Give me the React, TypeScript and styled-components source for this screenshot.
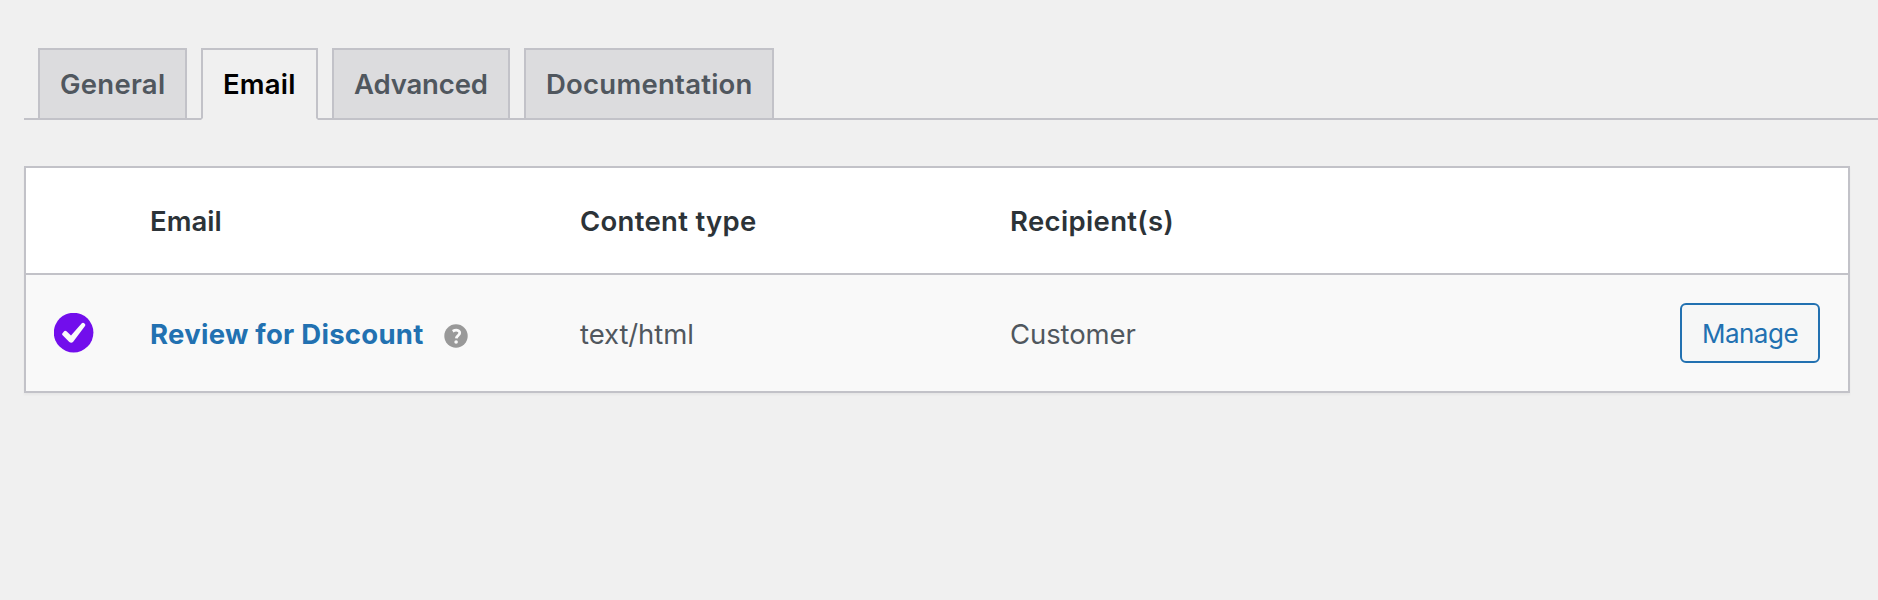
import React from "react";
import styled, { createGlobalStyle } from "styled-components";

const GlobalStyle = createGlobalStyle`
  *, *::before, *::after { box-sizing: border-box; }
  body {
    margin: 0;
    min-height: 600px;
    background: #f0f0f0;
    font-family: Inter, "Liberation Sans", sans-serif;
    font-size: 27.5px;
    line-height: 36px;
    color: #50575e;
    overflow: hidden;
  }
`;

const Page = styled.main`
  padding: 48px 0 0 24px;
`;

const Tabs = styled.nav`
  display: flex;
  gap: 14px;
  height: 72px;
  padding-left: 14px;
  border-bottom: 2px solid #c2c2c8;
`;

const Tab = styled.a<{ $active?: boolean; $width: number; $tracking: number }>`
  width: ${(p) => p.$width}px;
  height: ${(p) => (p.$active ? 72 : 70)}px;
  padding: 16px 0 0 20px;
  border: 2px solid #c2c2c8;
  border-bottom: ${(p) => (p.$active ? "2px solid #f0f0f0" : "0")};
  background: ${(p) => (p.$active ? "#f0f0f0" : "#dcdcde")};
  color: ${(p) => (p.$active ? "#000" : "#50575e")};
  font-weight: 600;
  letter-spacing: ${(p) => p.$tracking}px;
  white-space: nowrap;
  text-decoration: none;
`;

const Table = styled.section`
  width: 1826px;
  margin-top: 46px;
  border: 2px solid #c2c2c8;
  background: #fff;
  box-shadow: 0 2px 2px rgba(0, 0, 0, 0.04);
`;

const Row = styled.div`
  display: grid;
  grid-template-columns: 124px 430px 430px 1fr auto;
  align-items: center;
  padding-right: 28px;
`;

const HeaderRow = styled(Row)`
  height: 107px;
  padding-bottom: 2px;
  border-bottom: 2px solid #c2c2c8;
  color: #2c3338;
  font-weight: 600;
`;

const BodyRow = styled(Row)`
  height: 116px;
  background: #f9f9f9;
`;

const Cell = styled.div<{ $tracking?: number }>`
  display: flex;
  align-items: center;
  padding-top: 2px;
  letter-spacing: ${(p) => p.$tracking ?? 0}px;
  white-space: nowrap;
`;

const StatusCell = styled.div`
  padding-left: 28px;
  line-height: 0;
`;

const EmailLink = styled.a`
  color: #2271b1;
  font-weight: 700;
  text-decoration: none;
`;

const HelpIcon = styled.svg`
  margin: 3px 0 0 20px;
`;

const ManageButton = styled.button`
  width: 140px;
  height: 60px;
  padding: 1px 0 0;
  border: 2px solid #2271b1;
  border-radius: 6px;
  background: #f6f7f7;
  color: #2271b1;
  font: 400 26px/36px Inter, "Liberation Sans", sans-serif;
  letter-spacing: -0.5px;
`;

const tabs = [
  { label: "General", width: 149, tracking: 0.25 },
  { label: "Email", width: 117, tracking: 0.2, active: true },
  { label: "Advanced", width: 178, tracking: -0.15 },
  { label: "Documentation", width: 250, tracking: 0.25 },
];

export default function App() {
  return (
    <>
      <GlobalStyle />
      <Page>
        <Tabs>
          {tabs.map((t) => (
            <Tab key={t.label} $active={t.active} $width={t.width} $tracking={t.tracking}>
              {t.label}
            </Tab>
          ))}
        </Tabs>
        <Table>
          <HeaderRow>
            <span />
            <Cell $tracking={0}>Email</Cell>
            <Cell $tracking={0.3}>Content type</Cell>
            <Cell $tracking={0.35}>Recipient(s)</Cell>
          </HeaderRow>
          <BodyRow>
            <StatusCell>
              <svg width="40" height="40" viewBox="0 0 40 40" aria-label="Enabled">
                <circle cx="19.6" cy="19.6" r="19.8" fill="#720eec" />
                <path
                  d="M8.3 20.4 L10.4 18.1 Q11.4 17.4 12.5 18.2 L17 22.4 L27.8 10.2 Q28.8 9.3 29.8 10 L31 11 Q31.7 11.9 31 13 L19.2 28.8 Q17.3 30.6 15.3 28.9 L8.4 22 Q7.8 21.2 8.3 20.4 Z"
                  fill="#f9f9f9"
                />
              </svg>
            </StatusCell>
            <Cell $tracking={0.27}>
              <EmailLink>Review for Discount</EmailLink>
              <HelpIcon width="24" height="24" viewBox="0 0 24 24" aria-label="Help">
                <circle cx="12" cy="12" r="11.7" fill="#999" />
                <path
                  d="M8.7 7.2 Q12.2 5.2 14.6 6.8 Q17 9 14.3 11.3 Q12.4 12.6 12.3 14.4"
                  fill="none"
                  stroke="#f9f9f9"
                  strokeWidth="2.8"
                />
                <circle cx="12.1" cy="18" r="1.8" fill="#f9f9f9" />
              </HelpIcon>
            </Cell>
            <Cell $tracking={-0.1}>text/html</Cell>
            <Cell $tracking={-0.1}>Customer</Cell>
            <ManageButton>Manage</ManageButton>
          </BodyRow>
        </Table>
      </Page>
    </>
  );
}
